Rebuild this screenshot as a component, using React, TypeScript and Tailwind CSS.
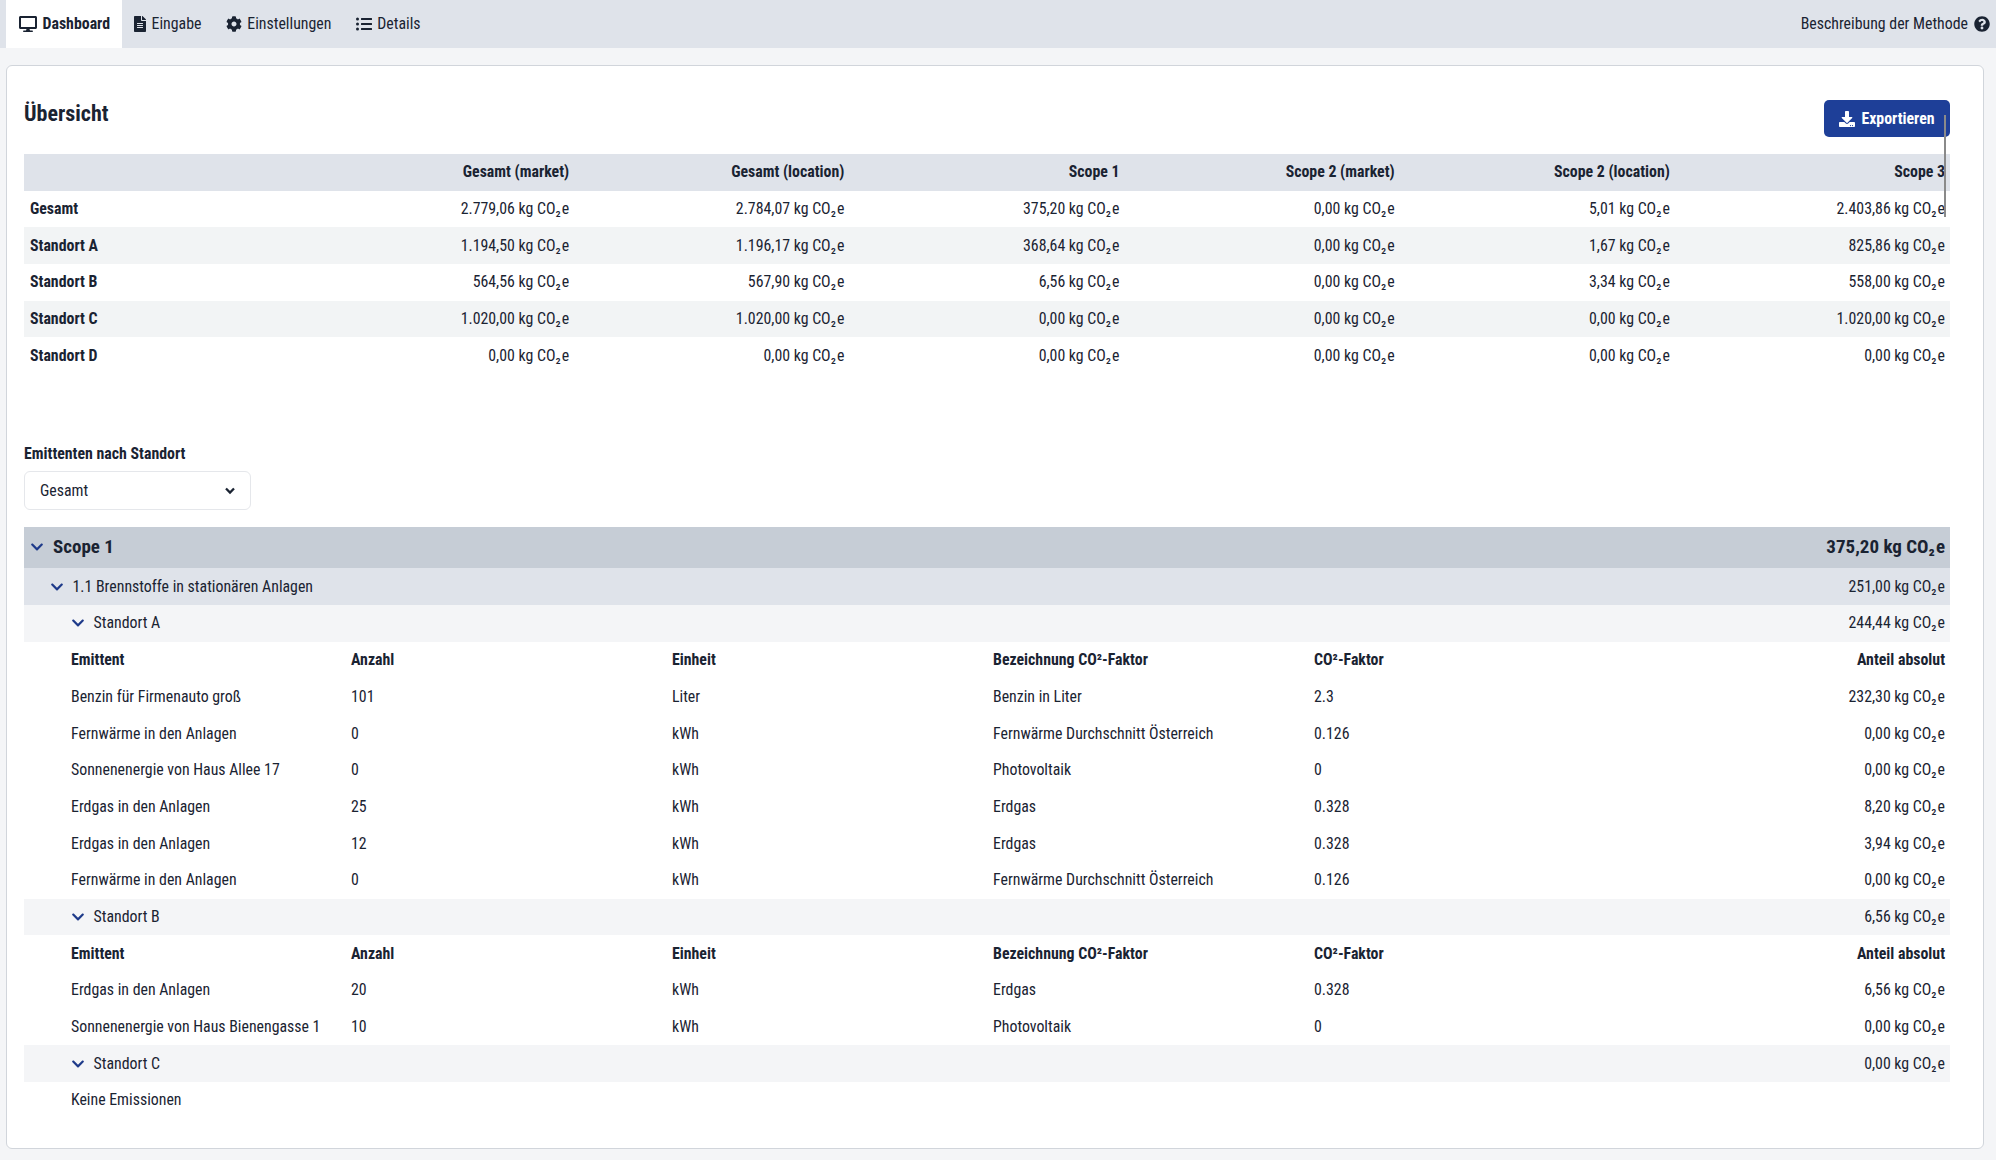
import React from "react";
import { FaDesktop, FaFileAlt, FaCog, FaListUl, FaQuestionCircle, FaDownload, FaChevronDown } from "react-icons/fa";

const CO = () => (<>CO<span className="tracking-[1px]">₂</span>e</>);

const top = [
  ["Gesamt", "2.779,06", "2.784,07", "375,20", "0,00", "5,01", "2.403,86"],
  ["Standort A", "1.194,50", "1.196,17", "368,64", "0,00", "1,67", "825,86"],
  ["Standort B", "564,56", "567,90", "6,56", "0,00", "3,34", "558,00"],
  ["Standort C", "1.020,00", "1.020,00", "0,00", "0,00", "0,00", "1.020,00"],
  ["Standort D", "0,00", "0,00", "0,00", "0,00", "0,00", "0,00"],
];
const heads = ["Gesamt (market)", "Gesamt (location)", "Scope 1", "Scope 2 (market)", "Scope 2 (location)", "Scope 3"];

const A = [
  ["Benzin für Firmenauto groß", "101", "Liter", "Benzin in Liter", "2.3", "232,30"],
  ["Fernwärme in den Anlagen", "0", "kWh", "Fernwärme Durchschnitt Österreich", "0.126", "0,00"],
  ["Sonnenenergie von Haus Allee 17", "0", "kWh", "Photovoltaik", "0", "0,00"],
  ["Erdgas in den Anlagen", "25", "kWh", "Erdgas", "0.328", "8,20"],
  ["Erdgas in den Anlagen", "12", "kWh", "Erdgas", "0.328", "3,94"],
  ["Fernwärme in den Anlagen", "0", "kWh", "Fernwärme Durchschnitt Österreich", "0.126", "0,00"],
];
const B = [
  ["Erdgas in den Anlagen", "20", "kWh", "Erdgas", "0.328", "6,56"],
  ["Sonnenenergie von Haus Bienengasse 1", "10", "kWh", "Photovoltaik", "0", "0,00"],
];

const gridTop = "grid grid-cols-[270px_repeat(6,1fr)] items-center";
const gridDet = "grid grid-cols-[280px_321px_321px_321px_1fr_1fr] items-center h-[36.7px] pl-[47px] pr-[5px]";

function Chevron() {
  return <FaChevronDown className="text-[#1e3a8a] w-[14px] h-[14px]" />;
}

function Detail({ rows }: { rows: string[][] }) {
  return (
    <>
      <div className={`${gridDet} font-bold`}>
        <div>Emittent</div><div>Anzahl</div><div>Einheit</div><div>Bezeichnung CO²-Faktor</div><div>CO²-Faktor</div><div className="text-right">Anteil absolut</div>
      </div>
      {rows.map((r, i) => (
        <div key={i} className={gridDet}>
          <div className="whitespace-nowrap">{r[0]}</div><div>{r[1]}</div><div>{r[2]}</div><div>{r[3]}</div><div>{r[4]}</div>
          <div className="text-right">{r[5]} kg <CO /></div>
        </div>
      ))}
    </>
  );
}

function Standort({ name, value }: { name: string; value: string }) {
  return (
    <div className="flex items-center justify-between h-[36.7px] bg-[#f4f5f7] pl-[46.5px] pr-[5px]">
      <div className="flex items-center gap-[9px]"><Chevron />{name}</div>
      <div>{value} kg <CO /></div>
    </div>
  );
}

export default function App() {
  return (
    <div className="min-h-[1160px] bg-[#f4f5f7] text-[#1a2332] text-[15.85px] leading-[20px] [font-family:Roboto,sans-serif] [font-stretch:condensed]">
      <nav className="flex items-center justify-between h-[48px] bg-[#dfe3ea] pl-[6px] pr-[6px]">
        <div className="flex h-full">
          <div className="flex items-center gap-[6px] h-full w-[116px] bg-white pl-[12.5px] font-bold"><FaDesktop className="w-[18px] h-[16px]" />Dashboard</div>
          <div className="flex items-center gap-[5.3px] h-full px-[12.3px]"><FaFileAlt className="w-[12px] h-[16px]" />Eingabe</div>
          <div className="flex items-center gap-[5.3px] h-full px-[12.3px]"><FaCog className="w-[16px] h-[16px]" />Einstellungen</div>
          <div className="flex items-center gap-[5.3px] h-full px-[12.3px]"><FaListUl className="w-[16px] h-[16px]" />Details</div>
        </div>
        <div className="flex items-center gap-[6px]">Beschreibung der Methode<FaQuestionCircle className="w-[16px] h-[16px]" /></div>
      </nav>

      <main className="relative mx-[6px] mt-[17px] w-[1978px] h-[1084px] bg-white border border-[#d1d5db] rounded-[6px] pl-[17px] pr-[33px] pt-[34px]">
        <div className="absolute right-[37px] top-[49px] w-[2px] h-[102px] bg-[#8a8a8a] z-10" />
        <div className="flex items-start justify-between h-[54px]">
          <h1 className="text-[22px] font-bold leading-[28px]">Übersicht</h1>
          <button className="flex items-center justify-center gap-[6px] w-[126px] h-[37px] bg-[#1e3f98] text-white font-bold rounded-[5px]">
            <FaDownload className="w-[16px] h-[16px]" />Exportieren
          </button>
        </div>

        <div className={`${gridTop} h-[36.6px] bg-[#dfe3ea] font-bold pr-[5px]`}>
          <div />
          {heads.map((h) => <div key={h} className="text-right">{h}</div>)}
        </div>
        {top.map((r, i) => (
          <div key={r[0]} className={`${gridTop} h-[36.7px] pr-[5px] ${i % 2 === 1 ? "bg-[#f2f4f5]" : "bg-white"}`}>
            <div className="font-bold pl-[6px]">{r[0]}</div>
            {r.slice(1).map((v, j) => <div key={j} className="text-right">{v} kg <CO /></div>)}
          </div>
        ))}

        <label className="block font-bold mt-[70.2px] mb-[7px]">Emittenten nach Standort</label>
        <div className="flex items-center justify-between w-[227px] h-[39px] border border-[#e5e7eb] rounded-[6px] pl-[15px] pr-[15px]">
          <span className="pt-[1px]">Gesamt</span>
          <svg viewBox="0 0 10 8" className="w-[10px] h-[8px]"><path d="M1 1.5 5 5.5 9 1.5" fill="none" stroke="currentColor" strokeWidth="2.3" /></svg>
        </div>

        <div className="flex items-center justify-between h-[41px] mt-[16.7px] bg-[#c6cdd6] pl-[6px] pr-[5px] text-[19px] font-bold">
          <div className="flex items-center gap-[9px]"><Chevron />Scope 1</div>
          <div>375,20 kg <CO /></div>
        </div>
        <div className="flex items-center justify-between h-[37.2px] bg-[#dfe3ea] pl-[26px] pr-[5px]">
          <div className="flex items-center gap-[8.5px]"><Chevron />1.1 Brennstoffe in stationären Anlagen</div>
          <div>251,00 kg <CO /></div>
        </div>
        <Standort name="Standort A" value="244,44" />
        <Detail rows={A} />
        <Standort name="Standort B" value="6,56" />
        <Detail rows={B} />
        <Standort name="Standort C" value="0,00" />
        <div className="flex items-center h-[36.7px] pl-[47px]">Keine Emissionen</div>
      </main>
    </div>
  );
}
